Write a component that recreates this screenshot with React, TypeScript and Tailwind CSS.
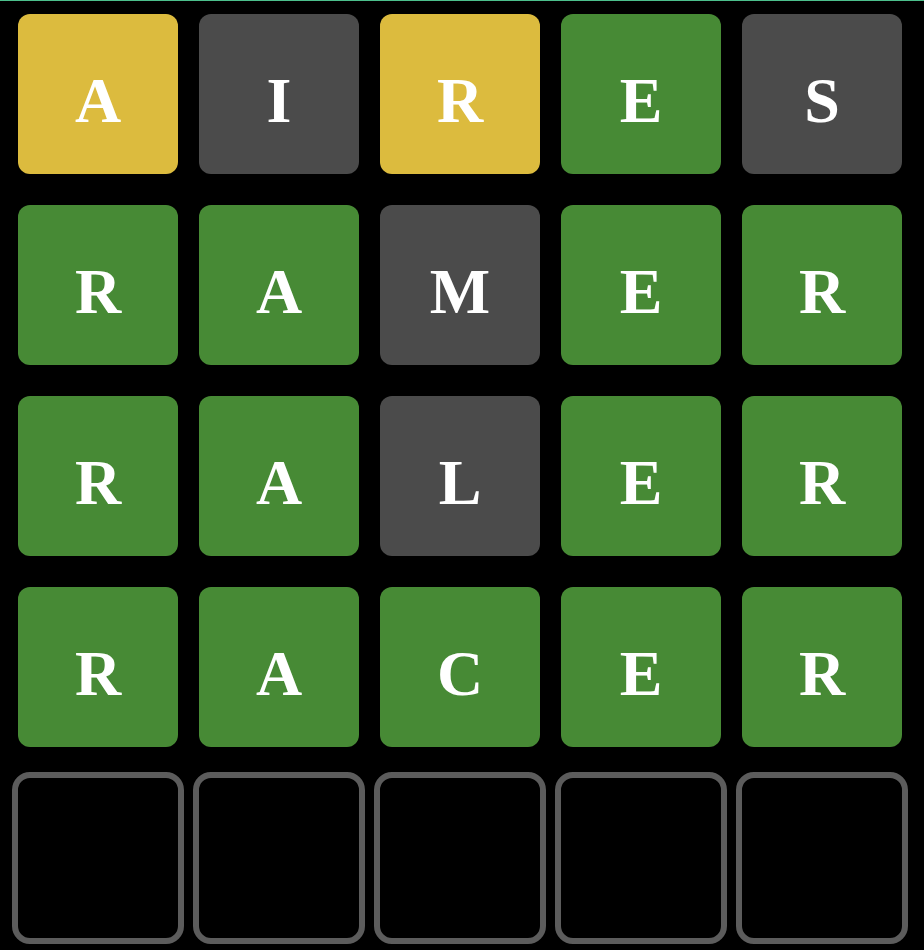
type TileState = 'present' | 'absent' | 'correct' | 'empty';

interface Guess {
  letter: string;
  state: TileState;
}

const STATE_CLASS: Record<TileState, string> = {
  present: 'bg-[#dcbb3e]',
  absent: 'bg-[#4b4b4b]',
  correct: 'bg-[#478a35]',
  empty: 'bg-black outline-[6px] outline-solid outline-[#5c5c5c]',
};

function row(word: string, states: string): Guess[] {
  // states: p = present, a = absent, c = correct
  return word.split('').map((letter, i) => ({
    letter,
    state: states[i] === 'p' ? 'present' : states[i] === 'a' ? 'absent' : 'correct',
  }));
}

const BOARD: Guess[][] = [
  row('AIRES', 'papca'),
  row('RAMER', 'ccacc'),
  row('RALER', 'ccacc'),
  row('RACER', 'ccccc'),
  Array.from({ length: 5 }, () => ({ letter: '', state: 'empty' as TileState })),
];

function Tile({ letter, state }: Guess) {
  return (
    <div
      className={`flex h-[160px] w-[160px] items-center justify-center rounded-xl pt-[14px] ${STATE_CLASS[state]}`}
    >
      <span className="font-['Liberation_Serif',serif] text-[64px] font-bold leading-none text-white">
        {letter}
      </span>
    </div>
  );
}

export default function App() {
  return (
    <div className="min-h-[950px] w-[924px] bg-black">
      <div className="h-px bg-[#4cbf8c]" />
      <div className="grid grid-cols-[repeat(5,160px)] gap-x-[21px] gap-y-[31px] pl-[18px] pt-[13px]">
        {BOARD.map((guesses, r) =>
          guesses.map((g, c) => <Tile key={`${r}-${c}`} {...g} />),
        )}
      </div>
    </div>
  );
}
